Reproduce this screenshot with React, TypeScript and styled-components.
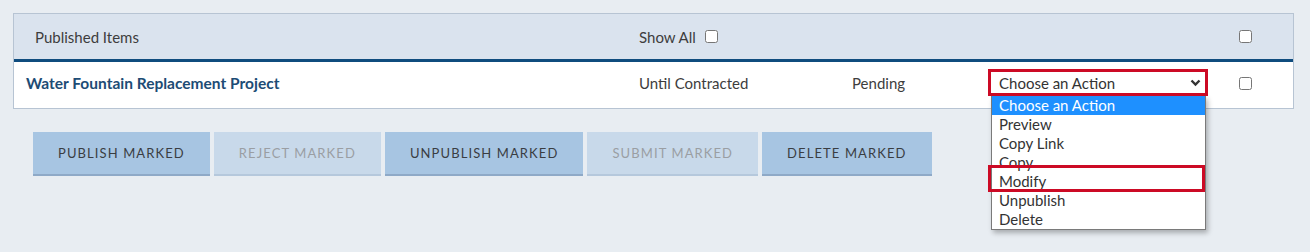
import React from "react";
import styled, { createGlobalStyle } from "styled-components";

const Global = createGlobalStyle`
  html, body { margin: 0; padding: 0; background: #e8edf2; }
  body { font-family: Lato, "Open Sans", sans-serif; color: #3a3a3a; min-height: 252px; }
`;

const Page = styled.div`
  padding: 13px 16px 0 13px;
  width: 1310px;
  min-height: 252px;
  box-sizing: border-box;
`;

const Table = styled.div`
  border: 1px solid #b7c4d3;
  background: #fff;
`;

const Row = styled.div<{ $head?: boolean }>`
  display: grid;
  grid-template-columns: 625px 213px 138px 249px 1fr;
  align-items: center;
  height: ${(p) => (p.$head ? "48px" : "46px")};
  box-sizing: border-box;
  padding-bottom: ${(p) => (p.$head ? "0" : "4px")};
  background: ${(p) => (p.$head ? "#dae3ee" : "#fff")};
  border-bottom: ${(p) => (p.$head ? "3px solid #0f4c7e" : "none")};
  font-size: 15px;
`;

const Cell = styled.div<{ $pad?: number }>`
  padding-left: ${(p) => p.$pad ?? 0}px;
  display: flex;
  align-items: center;
  position: relative;
`;

const Title = styled.span`
  font-weight: 700;
  font-size: 15.5px;
  color: #1d4c75;
`;

const Label = styled.span`
  color: #3d3d3d;
`;

const Check = styled.input.attrs({ type: "checkbox" })`
  margin: 0;
  width: 13px;
  height: 13px;
`;

const ShowAll = styled.label`
  display: flex;
  align-items: center;
  gap: 9px;
  color: #3d3d3d;
`;

const FakeSelect = styled.div`
  width: 216px;
  height: 22px;
  margin-left: 1px;
  display: flex;
  align-items: center;
  justify-content: space-between;
  padding: 0 6px 0 8px;
  box-sizing: border-box;
  font-size: 15px;
  color: #333;
  background: #fff;
`;

const Highlight = styled.div<{ $l: number; $t: number; $w: number; $h: number }>`
  position: absolute;
  left: ${(p) => p.$l}px;
  top: ${(p) => p.$t}px;
  width: ${(p) => p.$w}px;
  height: ${(p) => p.$h}px;
  border: 3px solid #cc0a25;
  box-sizing: border-box;
  pointer-events: none;
  z-index: 5;
`;

const List = styled.ul`
  position: absolute;
  left: 1px;
  top: 24px;
  width: 215px;
  margin: 0;
  padding: 0;
  list-style: none;
  background: #fff;
  border: 1px solid #7a7a7a;
  border-top: none;
  box-sizing: border-box;
  box-shadow: 2px 3px 5px rgba(0, 0, 0, 0.28);
  z-index: 3;
`;

const Option = styled.li<{ $active?: boolean }>`
  height: 19px;
  line-height: 18px;
  padding-left: 7px;
  font-size: 15px;
  color: ${(p) => (p.$active ? "#fff" : "#333")};
  background: ${(p) => (p.$active ? "#1e90ff" : "transparent")};
`;

const Buttons = styled.div`
  display: flex;
  gap: 4px;
  margin: 23px 0 0 20px;
`;

const Btn = styled.button<{ $off?: boolean }>`
  height: 44px;
  padding: 0 25px;
  border: none;
  border-bottom: 2px solid ${(p) => (p.$off ? "#b5c8dc" : "#8ea9c7")};
  background: ${(p) => (p.$off ? "#c8d9ea" : "#a7c5e2")};
  color: ${(p) => (p.$off ? "#9a9ea3" : "#3a3d42")};
  font-family: Lato, "Open Sans", sans-serif;
  font-size: 13px;
  letter-spacing: 1.1px;
  text-transform: uppercase;
  cursor: pointer;
`;

const options = ["Choose an Action", "Preview", "Copy Link", "Copy", "Modify", "Unpublish", "Delete"];

export default function App() {
  return (
    <>
      <Global />
      <Page>
        <Table>
          <Row $head>
            <Cell $pad={21}><Label>Published Items</Label></Cell>
            <Cell>
              <ShowAll>Show All <Check /></ShowAll>
            </Cell>
            <Cell />
            <Cell />
            <Cell><Check /></Cell>
          </Row>
          <Row>
            <Cell $pad={12}><Title>Water Fountain Replacement Project</Title></Cell>
            <Cell><Label>Until Contracted</Label></Cell>
            <Cell><Label>Pending</Label></Cell>
            <Cell>
              <FakeSelect>
                <span>Choose an Action</span>
                <svg width="11" height="8" viewBox="0 0 11 8">
                  <path d="M1.5 1.5 L5.5 5.5 L9.5 1.5" fill="none" stroke="#333" strokeWidth="2.4" />
                </svg>
              </FakeSelect>
              <Highlight $l={-2} $t={-3} $w={220} $h={27} />
              <List>
                {options.map((o, i) => (
                  <Option key={o} $active={i === 0}>{o}</Option>
                ))}
              </List>
              <Highlight $l={-2} $t={93} $w={217} $h={27} />
            </Cell>
            <Cell><Check /></Cell>
          </Row>
        </Table>
        <Buttons>
          <Btn>Publish Marked</Btn>
          <Btn $off>Reject Marked</Btn>
          <Btn>Unpublish Marked</Btn>
          <Btn $off>Submit Marked</Btn>
          <Btn>Delete Marked</Btn>
        </Buttons>
      </Page>
    </>
  );
}
